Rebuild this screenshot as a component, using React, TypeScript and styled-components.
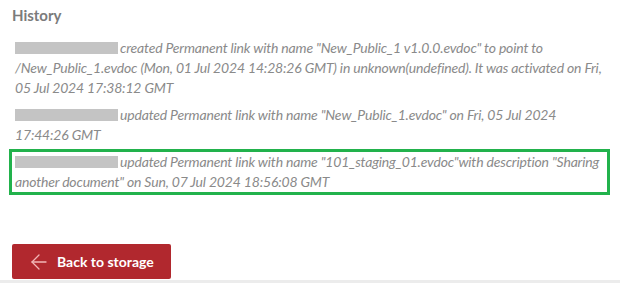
import { createGlobalStyle, styled } from "styled-components";
import { ArrowLeft } from "lucide-react";

type Entry = {
	id: number;
	text: string;
	highlighted?: boolean;
};

const entries: Entry[] = [
	{
		id: 1,
		text: 'created Permanent link with name "New_Public_1 v1.0.0.evdoc" to point to /New_Public_1.evdoc (Mon, 01 Jul 2024 14:28:26 GMT) in unknown(undefined). It was activated on Fri, 05 Jul 2024 17:38:12 GMT',
	},
	{
		id: 2,
		text: 'updated Permanent link with name "New_Public_1.evdoc" on Fri, 05 Jul 2024 17:44:26 GMT',
	},
	{
		id: 3,
		text: 'updated Permanent link with name "101_staging_01.evdoc"with description "Sharing another document" on Sun, 07 Jul 2024 18:56:08 GMT',
		highlighted: true,
	},
];

export default function App() {
	return (
		<>
			<GlobalStyle />
			<Page>
				<Title>History</Title>
				<EntryList>
					{entries.map((entry) => (
						<EntryRow key={entry.id} $highlighted={entry.highlighted}>
							<Redacted />
							{entry.text}
						</EntryRow>
					))}
				</EntryList>
				<Footer>
					<BackButton type="button">
						<ArrowLeft size={24} strokeWidth={1.3} />
						Back to storage
					</BackButton>
				</Footer>
			</Page>
		</>
	);
}

//#region Styled Components
const GlobalStyle = createGlobalStyle`
  html, body {
    margin: 0;
    padding: 0;
    background: #ffffff;
  }
  body {
    font-family: Lato, "Open Sans", Arial, sans-serif;
  }
`;

const Page = styled.div`
  width: 620px;
  height: 283px;
  box-sizing: border-box;
  padding: 5px 10px 0 9px;
  display: flex;
  flex-direction: column;
  border-bottom: 3px solid #ececec;
`;

const Title = styled.h3`
  margin: 0 0 10px 3px;
  font-size: 15px;
  line-height: 20px;
  font-weight: 700;
  color: #7b7b7b;
`;

const EntryList = styled.div`
  display: flex;
  flex-direction: column;
  gap: 1px;
`;

const EntryRow = styled.div<{ $highlighted?: boolean }>`
  border: 3px solid ${({ $highlighted }) => ($highlighted ? "#22b24c" : "transparent")};
  padding: 0 0 0 3px;
  font-size: 14px;
  line-height: 20px;
  letter-spacing: -0.18px;
  font-style: italic;
  color: #8a8a8a;
`;

const Redacted = styled.span`
  display: inline-block;
  width: 103px;
  height: 12px;
  margin-right: 2px;
  vertical-align: -1px;
  background: #c4c4c4;
`;

const Footer = styled.div`
  margin-top: auto;
  padding: 0 0 1px 3px;
`;

const BackButton = styled.button`
  display: flex;
  align-items: center;
  gap: 6px;
  width: 159px;
  height: 35px;
  padding: 0 0 0 15px;
  border: none;
  border-radius: 2px;
  background: #b1282e;
  color: #ffffff;
  font-family: Lato, "Open Sans", Arial, sans-serif;
  font-size: 14px;
  font-weight: 700;
  cursor: pointer;

  svg {
    color: #f2b6b6;
    flex-shrink: 0;
  }
`;
//#endregion
